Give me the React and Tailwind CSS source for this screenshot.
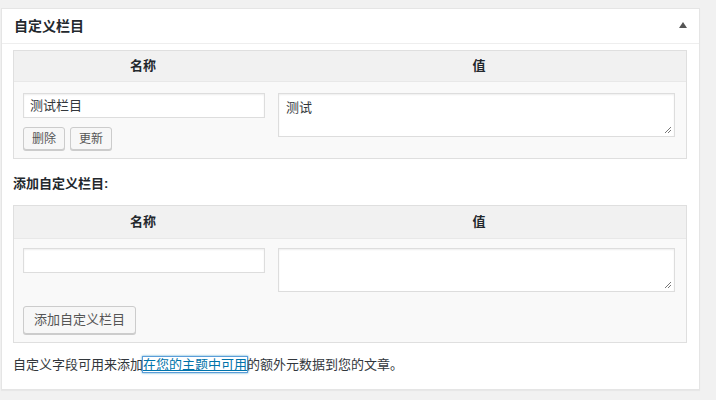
import React from "react";

const font = { fontFamily: '"Liberation Sans", "Noto Sans CJK SC", sans-serif' };

function Resize() {
  return (
    <svg className="absolute right-[2px] bottom-[2px]" width="8" height="8" viewBox="0 0 8 8">
      <path d="M1 7L7 1M4 7L7 4" stroke="#777" strokeWidth="1" />
    </svg>
  );
}

export default function App() {
  return (
    <div className="w-[716px] h-[400px] bg-[#f1f1f1] pt-[8px] pl-[1px] overflow-hidden" style={font}>
      <div className="w-[699px] h-[382px] bg-white border border-[#e5e5e5] shadow-[0_1px_1px_rgba(0,0,0,0.04)]">
        {/* header */}
        <div className="h-[35px] flex items-center justify-between pl-[12px] pr-[12px] border-b border-[#eeeeee]">
          <span className="text-[14px] font-bold text-[#23282d]">自定义栏目</span>
          <span className="w-0 h-0 border-l-[4px] border-r-[4px] border-b-[6px] border-l-transparent border-r-transparent border-b-[#555] mt-[-2px]" />
        </div>

        <div className="pl-[11px] pr-[12px] pt-[6px]">
          {/* existing field */}
          <div className="border border-[#dfdfdf] bg-[#f9f9f9]">
            <div className="grid grid-cols-[258px_1fr] h-[31px] bg-[#f1f1f1] border-b border-[#e8e8e8] items-center text-[13px] font-bold text-[#23282d]">
              <div className="text-center">名称</div>
              <div className="text-center">值</div>
            </div>
            <div className="grid grid-cols-[258px_1fr] pt-[11px] pb-[8px]">
              <div className="pl-[9px] pr-[7px]">
                <div className="h-[25px] bg-white border border-[#dddddd] shadow-[inset_0_1px_2px_rgba(0,0,0,0.07)] px-[6px] flex items-center text-[13px] text-[#32373c]">
                  测试栏目
                </div>
                <div className="flex gap-[5px] mt-[9px]">
                  <button className="h-[23px] px-[8px] text-[12px] text-[#555] bg-[#f7f7f7] border border-[#cccccc] rounded-[3px] shadow-[0_1px_0_#cccccc]">删除</button>
                  <button className="h-[23px] px-[8px] text-[12px] text-[#555] bg-[#f7f7f7] border border-[#cccccc] rounded-[3px] shadow-[0_1px_0_#cccccc]">更新</button>
                </div>
              </div>
              <div className="pl-[6px] pr-[11px]">
                <div className="relative h-[44px] bg-white border border-[#dddddd] shadow-[inset_0_1px_2px_rgba(0,0,0,0.07)] px-[7px] pt-[4px] text-[13px] text-[#32373c]">
                  测试
                  <Resize />
                </div>
              </div>
            </div>
          </div>

          <div className="mt-[16px] text-[13px] font-bold text-[#23282d] leading-[18px]">添加自定义栏目:</div>

          {/* new field */}
          <div className="mt-[12px] border border-[#dfdfdf] bg-[#f9f9f9]">
            <div className="grid grid-cols-[258px_1fr] h-[33px] bg-[#f1f1f1] border-b border-[#e8e8e8] items-center text-[13px] font-bold text-[#23282d]">
              <div className="text-center">名称</div>
              <div className="text-center">值</div>
            </div>
            <div className="grid grid-cols-[258px_1fr] pt-[9px]">
              <div className="pl-[9px] pr-[7px]">
                <div className="h-[25px] bg-white border border-[#dddddd] shadow-[inset_0_1px_2px_rgba(0,0,0,0.07)]" />
              </div>
              <div className="pl-[6px] pr-[11px]">
                <div className="relative h-[44px] bg-white border border-[#dddddd] shadow-[inset_0_1px_2px_rgba(0,0,0,0.07)]">
                  <Resize />
                </div>
              </div>
            </div>
            <div className="pl-[9px] pt-[14px] pb-[8px]">
              <button className="h-[28px] px-[10px] text-[13px] text-[#555] bg-[#f7f7f7] border border-[#cccccc] rounded-[3px] shadow-[0_1px_0_#cccccc]">添加自定义栏目</button>
            </div>
          </div>

          <p className="mt-[13px] text-[13px] text-[#32373c] leading-[18px]">
            自定义字段可用来添加
            <a className="text-[#0073aa] underline shadow-[0_0_0_1px_#5b9dd9,0_0_2px_1px_rgba(30,140,190,0.8)]">在您的主题中可用</a>
            的额外元数据到您的文章。
          </p>
        </div>
      </div>
    </div>
  );
}
